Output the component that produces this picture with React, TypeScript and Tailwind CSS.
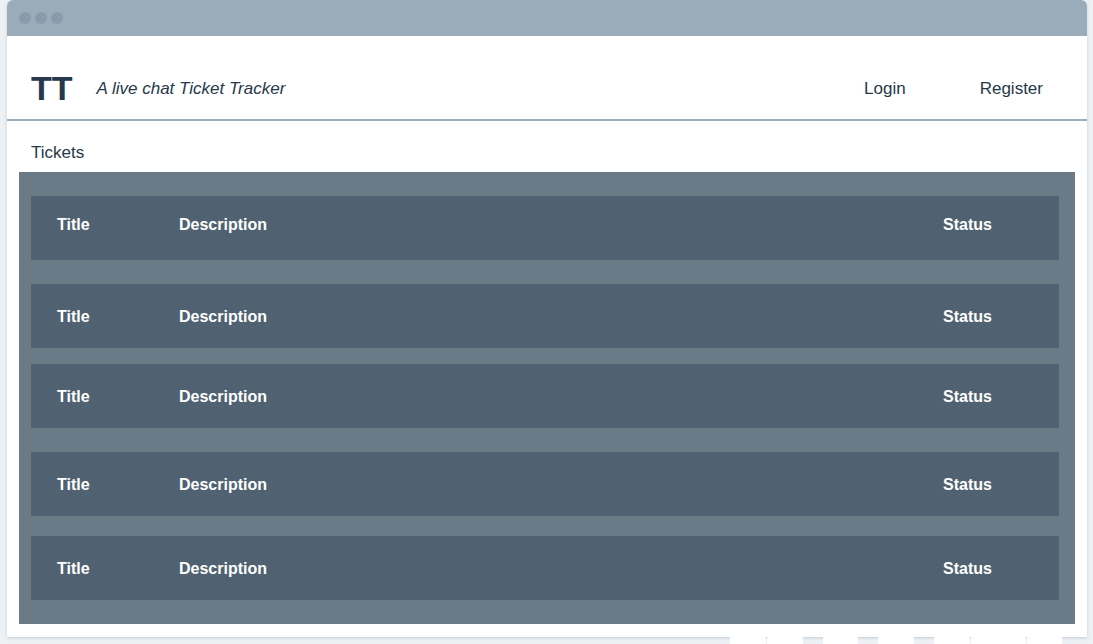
import React from 'react';

const rows = [
  { title: 'Title', description: 'Description', status: 'Status', extra: 'pb-[6px]' },
  { title: 'Title', description: 'Description', status: 'Status', extra: 'mt-[24px] pt-[2px]' },
  { title: 'Title', description: 'Description', status: 'Status', extra: 'mt-[16px] pt-[2px]' },
  { title: 'Title', description: 'Description', status: 'Status', extra: 'mt-[24px] pt-[2px]' },
  { title: 'Title', description: 'Description', status: 'Status', extra: 'mt-[20px] pt-[2px]' },
];

export default function App() {
  return (
    <div
      className="w-full h-[644px] overflow-hidden bg-[#edf1f4] pl-[7px] pr-[6px]"
      style={{ fontFamily: '"Liberation Sans", Arial, sans-serif' }}
    >
      {/* Browser window */}
      <div className="flex flex-col h-[637px] bg-white rounded-t-[6px] shadow-[0_1px_3px_rgba(120,140,160,0.35)]">
        {/* Title bar */}
        <div className="h-[36px] shrink-0 bg-[#9aacba] rounded-t-[6px] flex items-center pl-[12px] gap-[4px]">
          <span className="w-[12px] h-[12px] rounded-full bg-[#8a9cab]" />
          <span className="w-[12px] h-[12px] rounded-full bg-[#8a9cab]" />
          <span className="w-[12px] h-[12px] rounded-full bg-[#8a9cab]" />
        </div>

        {/* Header */}
        <header className="h-[85px] shrink-0 flex items-center justify-between pl-[24px] pr-[44px] pt-[20px] border-b-2 border-[#9aacba] text-[#26384a]">
          <div className="flex items-center">
            <span className="text-[34px] font-bold leading-none">TT</span>
            <span className="ml-[24px] text-[17px] italic pt-[2px]">A live chat Ticket Tracker</span>
          </div>
          <nav className="flex items-center gap-[74px] text-[17px] pt-[2px]">
            <span>Login</span>
            <span>Register</span>
          </nav>
        </header>

        {/* Tickets */}
        <h2 className="pl-[24px] pt-[20px] pb-[7px] text-[17px] leading-[24px] text-[#26384a]">Tickets</h2>

        <div className="mx-[12px] bg-[#6a7b87] pl-[12px] pr-[16px] py-[24px] flex flex-col">
          {rows.map((r, i) => (
            <div
              key={i}
              className={`${r.extra} h-[64px] bg-[#506271] grid grid-cols-[122px_1fr_116px] items-center pl-[26px] text-white text-[16px] font-bold`}
            >
              <span>{r.title}</span>
              <span>{r.description}</span>
              <span>{r.status}</span>
            </div>
          ))}
        </div>
      </div>

      {/* Peeking content below window */}
      <div className="flex mt-[-1px] pl-[723px] gap-[20px]">
        <div className="flex gap-px">
          <span className="w-[36px] h-[8px] bg-white rounded-t-[3px]" />
          <span className="w-[36px] h-[8px] bg-white rounded-t-[3px]" />
        </div>
        <span className="w-[35px] h-[8px] bg-white rounded-t-[3px]" />
        <span className="w-[36px] h-[8px] bg-white rounded-t-[3px]" />
        <div className="flex gap-px">
          <span className="w-[36px] h-[8px] bg-white rounded-t-[3px]" />
          <span className="w-[55px] h-[8px] bg-white rounded-t-[3px]" />
          <span className="w-[35px] h-[8px] bg-white rounded-t-[3px]" />
        </div>
      </div>
    </div>
  );
}
